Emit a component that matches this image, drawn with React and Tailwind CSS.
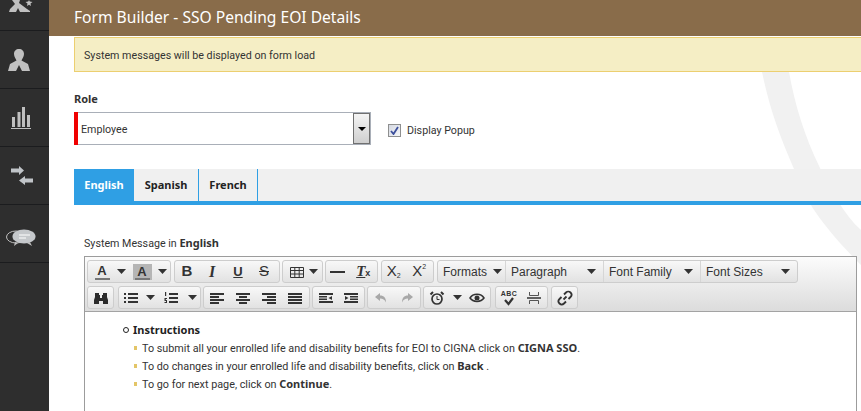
import React from "react";

const Caret = () => (
  <svg width="9" height="5" viewBox="0 0 9 5" className="shrink-0"><path d="M0 0h9L4.5 5z" fill="#333" /></svg>
);

function Btn({ children, w = "w-[26px]" }) {
  return <div className={`${w} h-full flex items-center justify-center`}>{children}</div>;
}

function Group({ children, className = "" }) {
  return (
    <div className={`h-[23px] flex items-stretch rounded-[3px] border border-[#cdcdcd] bg-gradient-to-b from-[#f8f8f8] to-[#e2e2e2] ${className}`}>
      {children}
    </div>
  );
}

function Ico({ children, w = 16, h = 16 }) {
  return <svg width={w} height={h} viewBox={`0 0 ${w} ${h}`}>{children}</svg>;
}

const Lines = ({ rows }) => (
  <Ico>
    {rows.map((r, i) => <rect key={i} x={r[0]} y={r[1]} width={r[2]} height="2" fill="#333" />)}
  </Ico>
);

function ListBox({ label, w, pr = "pr-[7px]" }) {
  return (
    <div className={`${w} ${pr} h-full flex items-center justify-between pl-[5px] border-r border-[#d6d6d6] last:border-r-0`}>
      <span>{label}</span>
      <Caret />
    </div>
  );
}

function Bold({ children }) {
  return <b className="font-['Noto_Sans',sans-serif] font-bold text-[11px]">{children}</b>;
}

function Toolbar() {
  return (
    <div className="h-[55px] bg-gradient-to-b from-[#fcfcfc] to-[#dcdcdc] border-b border-[#a3a3a3] pl-[2px] pt-[3px] flex flex-col gap-[3px] font-['Liberation_Sans',sans-serif] text-[12px] text-[#333]">
      <div className="flex gap-[3px]">
        <Group className="w-[84px]">
          <Btn w="w-[28px]">
            <div className="flex flex-col items-center leading-none">
              <span className="text-[13px] font-bold leading-[13px]">A</span>
              <span className="w-[15px] h-[2px] bg-[#777] mt-[1px]" />
            </div>
          </Btn>
          <Btn w="w-[10px]"><Caret /></Btn>
          <Btn w="w-[32px]">
            <div className="flex flex-col items-center leading-none bg-[#b5b5b5] px-[2px] pt-[1px]">
              <span className="text-[13px] font-bold leading-[13px]">A</span>
              <span className="w-[15px] h-[2px] bg-[#777]" />
            </div>
          </Btn>
          <Btn w="w-[8px]"><Caret /></Btn>
        </Group>
        <Group className="w-[106px]">
          <Btn w="w-[24px]"><span className="font-bold text-[15px]">B</span></Btn>
          <Btn><span className="italic font-['Liberation_Serif',serif] font-bold text-[16px]">I</span></Btn>
          <Btn><span className="underline font-bold text-[13px]">U</span></Btn>
          <Btn><span className="line-through text-[15px]">S</span></Btn>
        </Group>
        <Group className="w-[41px] -ml-[1px]">
          <Btn w="w-[25px] pl-[3px]">
            <Ico>
              <path d="M1.500 3.500h13v10h-13zM1.500 6.500h13M1.500 10h13M5.800 3.500v10M10.200 3.500v10" fill="none" stroke="#333" />
            </Ico>
          </Btn>
          <Btn w="w-[10px]"><Caret /></Btn>
        </Group>
        <Group className="w-[53px] -ml-[1px]">
          <Btn w="w-[24px]"><div className="w-[15px] h-[2px] bg-[#333]" /></Btn>
          <Btn w="w-[28px]">
            <span className="italic font-bold text-[15px] underline font-['Liberation_Serif',serif]">T</span>
            <span className="font-bold text-[9px] mt-[5px]">x</span>
          </Btn>
        </Group>
        <Group className="w-[53px]">
          <Btn w="w-[24px]"><span className="text-[15px]">X</span><span className="text-[7px] mt-[10px]">2</span></Btn>
          <Btn w="w-[28px]"><span className="text-[15px]">X</span><span className="text-[7px] -mt-[8px]">2</span></Btn>
        </Group>
        <Group className="w-[361px]">
          <ListBox label="Formats" w="w-[68px]" pr="pr-[3px]" />
          <ListBox label="Paragraph" w="w-[98px]" />
          <ListBox label="Font Family" w="w-[97px]" />
          <ListBox label="Font Sizes" w="w-[96px]" />
        </Group>
      </div>
      <div className="flex gap-[2px]">
        <Group className="w-[27px]">
          <Btn>
            <Ico>
              <path d="M2 3h4v2h1v3h2V5h1V3h4v4l1 3v4H10v-3H6v3H1v-4l1-3z" fill="#2b2b2b" />
            </Ico>
          </Btn>
        </Group>
        <Group className="w-[83px] ml-[2px]">
          <Btn w="w-[24px]">
            <Lines rows={[[1, 3, 2], [5, 3, 10], [1, 7, 2], [5, 7, 10], [1, 11, 2], [5, 11, 10]]} />
          </Btn>
          <Btn w="w-[14px]"><Caret /></Btn>
          <Btn w="w-[28px]">
            <Ico>
              <path d="M2 2h1.200v4H2zM1.500 8h2.500v1H2.800v1H4v3H1.500v-1H3v-1H1.500z" fill="#333" />
              <path d="M6 3h9v2H6zM6 7h9v2H6zM6 11h9v2H6z" fill="#333" />
            </Ico>
          </Btn>
          <Btn w="w-[14px]"><Caret /></Btn>
        </Group>
        <Group className="w-[107px]">
          <Btn><Lines rows={[[1, 3, 14], [1, 6, 9], [1, 9, 14], [1, 12, 9]]} /></Btn>
          <Btn><Lines rows={[[1, 3, 14], [4, 6, 8], [1, 9, 14], [4, 12, 8]]} /></Btn>
          <Btn><Lines rows={[[1, 3, 14], [6, 6, 9], [1, 9, 14], [6, 12, 9]]} /></Btn>
          <Btn><Lines rows={[[1, 3, 14], [1, 6, 14], [1, 9, 14], [1, 12, 14]]} /></Btn>
        </Group>
        <Group className="w-[53px]">
          <Btn>
            <Ico>
              <path d="M1 3h14v2H1zM1 6h8v1.500H1zM1 8.500h8V10H1zM1 11h14v2H1zM14 6v4l-3.500-2z" fill="#333" />
            </Ico>
          </Btn>
          <Btn>
            <Ico>
              <path d="M1 3h14v2H1zM7 6h8v1.500H7zM7 8.500h8V10H7zM1 11h14v2H1zM2 6v4l3.500-2z" fill="#333" />
            </Ico>
          </Btn>
        </Group>
        <Group className="w-[54px]">
          <Btn>
            <Ico><path d="M2 7l5-4v2.500c4 0 6 2.500 6 7-1.500-3-3-4-6-4V11z" fill="#a8a8a8" /></Ico>
          </Btn>
          <Btn>
            <Ico><path d="M14 7L9 3v2.500c-4 0-6 2.500-6 7 1.500-3 3-4 6-4V11z" fill="#a8a8a8" /></Ico>
          </Btn>
        </Group>
        <Group className="w-[68px]">
          <Btn>
            <Ico>
              <circle cx="8" cy="9" r="5" fill="none" stroke="#333" strokeWidth="1.700" />
              <path d="M8 6v3.500h2.500" fill="none" stroke="#333" />
              <path d="M1.500 4.500l2.500-2.500M14.500 4.500L12 2" stroke="#333" strokeWidth="2" />
            </Ico>
          </Btn>
          <Btn w="w-[14px]"><Caret /></Btn>
          <Btn>
            <Ico>
              <path d="M1 8c3-5 11-5 14 0-3 4.500-11 4.500-14 0z" fill="none" stroke="#333" strokeWidth="1.500" />
              <circle cx="8" cy="8" r="2.500" fill="#333" />
            </Ico>
          </Btn>
        </Group>
        <Group className="w-[53px] ml-[2px]">
          <Btn>
            <div className="relative w-[16px] h-[16px]">
              <span className="absolute -top-[1px] left-0 text-[7px] font-bold tracking-[0.5px]">ABC</span>
              <svg width="16" height="16" viewBox="0 0 16 16" className="absolute inset-0">
                <path d="M4 10l3.500 4L12 8" fill="none" stroke="#333" strokeWidth="2.200" />
              </svg>
            </div>
          </Btn>
          <Btn>
            <Ico>
              <path d="M1 8h14" stroke="#333" strokeWidth="1.500" />
              <path d="M3.500 5.500V2M12.500 5.500V2M3.500 5.500h9M3.500 10.500V14M12.500 10.500V14M3.500 10.500h9" fill="none" stroke="#555" />
            </Ico>
          </Btn>
        </Group>
        <Group className="w-[27px] ml-[1px]">
          <Btn>
            <Ico>
              <path d="M6.500 9.500l3-3M7 4.500l2-2a2.500 2.500 0 0 1 4.500 4.500l-2 2M9 11.500l-2 2A2.500 2.500 0 0 1 2.500 9l2-2" fill="none" stroke="#333" strokeWidth="1.800" />
            </Ico>
          </Btn>
        </Group>
      </div>
    </div>
  );
}

function SideItem({ children, className = "" }) {
  return (
    <div className={`h-[58px] items-center border-b border-[#1b1c1e] flex justify-center overflow-hidden ${className}`}>
      {children}
    </div>
  );
}

function Sidebar() {
  return (
    <aside className="w-[49px] shrink-0 bg-[#2e2e2e]">
      <SideItem className="!h-[31px] !items-start pr-[8px]">
        <svg width="24" height="12" viewBox="0 0 24 12">
          <path d="M3 0h8l-1 3 8 6 3 2v1H11L9 8l-2 4H0l1-3 5-5z" fill="#c0c0c0" />
          <path d="M20 0l.8 1.500 2.700.5-2 1.500.5 2.500-2-1.200-2 1.200.5-2.500-2-1.500 2.700-.5z" fill="#c0c0c0" />
        </svg>
      </SideItem>
      <SideItem className="pr-[11px]">
        <svg width="22" height="22" viewBox="0 0 22 22">
          <path d="M11 0c3 0 5 2 5 5s-2 5-2.500 6.500L20 15l2 7h-8l-3-6-3 6H0l2-7 6.500-3.500C8 10 6 8 6 5s2-5 5-5z" fill="#c0c0c0" />
        </svg>
      </SideItem>
      <SideItem className="pr-[8px]">
        <svg width="22" height="22" viewBox="0 0 22 22">
          <path d="M2 10h3v10H2zM7.500 5h3v15h-3zM12 0h3v20h-3zM17 8h3v12h-3zM1 21h20v1H1z" fill="#c0c0c0" />
        </svg>
      </SideItem>
      <SideItem className="pr-[5px]">
        <svg width="22" height="19" viewBox="0 0 22 19">
          <path d="M0 2.500h8V0l5 4.500L8 9V6.500H0zM22 12.500h-8V10l-6 4.500 6 4.500v-2.500h8z" fill="#c0c4c8" />
        </svg>
      </SideItem>
      <SideItem className="pr-[8px] pt-[8px]">
        <svg width="32" height="18" viewBox="0 0 32 18">
          <ellipse cx="11" cy="8" rx="9.500" ry="6" fill="none" stroke="#c0c0c0" />
          <ellipse cx="19" cy="7.500" rx="11.500" ry="7" fill="#c5c8cb" />
          <path d="M10 13l-1 4 4-3zM25 13l2 4-5-3z" fill="#c0c0c0" />
          <path d="M14 6h11M14 9h7" stroke="#fff" />
        </svg>
      </SideItem>
    </aside>
  );
}

export default function App() {
  return (
    <div className="relative w-[861px] h-[411px] flex overflow-hidden bg-white font-['Roboto',sans-serif] text-[10.7px] text-[#333]">
      <Sidebar />
      <main className="relative flex-1 min-w-0">
        {/* background swoosh */}
        <svg className="absolute top-0 left-0" width="812" height="411" viewBox="0 0 812 411">
          <path d="M713 72C722 115 735 150 763 207C775 225 790 243 812 265V230C795 215 782 190 771 168C755 135 746 105 740 72z" fill="#f1f1f1" />
        </svg>
        <div className="relative">
          <header className="h-[36px] bg-[#896c4a] pl-[25px] flex items-center text-white text-[15.6px] font-['Noto_Sans',sans-serif]">
            Form Builder - SSO Pending EOI Details
          </header>
          <div className="ml-[25px] mt-[1px] h-[35px] flex items-center pl-[9px] pt-[3px] bg-[#f5eec5] border border-r-0 border-[#eccf70]">
            System messages will be displayed on form load
          </div>
          <div className="ml-[25px] mt-[20px] leading-[14px]"><Bold>Role</Bold></div>
          <div className="ml-[25px] mt-[5px] flex items-center">
            <div className="w-[297px] h-[33px] flex items-stretch border border-[#a9afb8] border-l-0 bg-white">
              <div className="w-[4px] bg-[#f00000] -my-[1px]" />
              <span className="flex-1 flex items-center pl-[3px] pt-[3px]">Employee</span>
              <div className="w-[17px] flex items-center justify-center bg-gradient-to-b from-[#f4f4f4] to-[#cfcfcf] border border-[#707070]">
                <svg width="8" height="4" viewBox="0 0 8 4"><path d="M0 0h8L4 4z" fill="#000" /></svg>
              </div>
            </div>
            <div className="ml-[17px] mt-[4px] w-[13px] h-[13px] flex items-center justify-center border border-[#8e8f8f] bg-gradient-to-br from-[#d5d9e2] to-[#f5f6f8]">
              <svg width="9" height="9" viewBox="0 0 9 9"><path d="M1 5l2.500 3L8 1" fill="none" stroke="#3c4f9c" strokeWidth="1.800" /></svg>
            </div>
            <label className="ml-[6px] mt-[5px]">Display Popup</label>
          </div>
          <div className="ml-[25px] mt-[24px] h-[36px] flex bg-[#f0f0f0] border-b-4 border-[#2f9fe4] text-[#222]">
            <div className="w-[60px] pt-[1px] flex items-center justify-center bg-[#2f9fe4] text-white"><Bold>English</Bold></div>
            <div className="w-[65px] pt-[1px] flex items-center justify-center border-r border-[#2f9fe4]"><Bold>Spanish</Bold></div>
            <div className="w-[59px] pt-[1px] flex items-center justify-center border-r border-[#2f9fe4]"><Bold>French</Bold></div>
          </div>
          <div className="ml-[35px] mt-[31px] leading-[14px]">System Message in <Bold>English</Bold></div>
          <div className="ml-[35px] mr-[4px] mt-[5px] h-[156px] border border-b-0 border-[#9c9c9c] bg-white">
            <Toolbar />
            <ul className="pl-[38px] pt-[9px]">
              <li className="h-[18px] flex items-center gap-[4px] text-[#222]">
                <span className="w-[6px] h-[6px] rounded-full border border-[#222]" />
                <Bold>Instructions</Bold>
              </li>
              {[
                <>To submit all your enrolled life and disability benefits for EOI to CIGNA click on <Bold>CIGNA SSO</Bold>.</>,
                <>To do changes in your enrolled life and disability benefits, click on <Bold>Back</Bold> .</>,
                <>To go for next page, click on <Bold>Continue</Bold>.</>,
              ].map((t, i) => (
                <li key={i} className="h-[18px] flex items-center ml-[11px] gap-[5px] text-[10.8px]">
                  <span className="w-[3px] h-[4px] bg-[#e3c567]" />
                  <span className="pt-[1px]">{t}</span>
                </li>
              ))}
            </ul>
          </div>
        </div>
      </main>
    </div>
  );
}
